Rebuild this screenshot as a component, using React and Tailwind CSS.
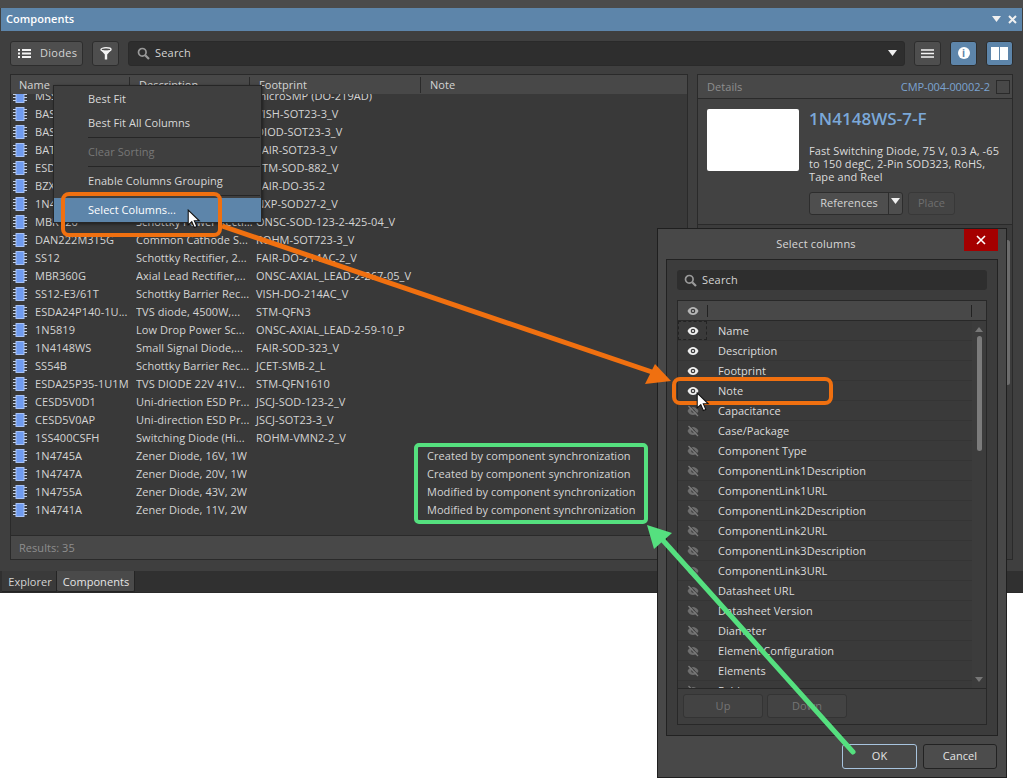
import React from "react";

const rows = [
  ["MSS1P", "Schottky Rectifier", "microSMP (DO-219AD)"],
  ["BAS16", "Switching Diode", "VISH-SOT23-3_V"],
  ["BAS40", "Schottky Diode", "DIOD-SOT23-3_V"],
  ["BAT54", "Schottky Diode", "FAIR-SOT23-3_V"],
  ["ESD5", "ESD Protection", "STM-SOD-882_V"],
  ["BZX55", "Zener Diode", "FAIR-DO-35-2"],
  ["1N4148", "Small Signal Diode", "NXP-SOD27-2_V"],
  ["MBR120", "Schottky Power Rectifier", "ONSC-SOD-123-2-425-04_V"],
  ["DAN222M3T5G", "Common Cathode S...", "ROHM-SOT723-3_V"],
  ["SS12", "Schottky Rectifier, 2...", "FAIR-DO-214AC-2_V"],
  ["MBR360G", "Axial Lead Rectifier,...", "ONSC-AXIAL_LEAD-2-267-05_V"],
  ["SS12-E3/61T", "Schottky Barrier Rec...", "VISH-DO-214AC_V"],
  ["ESDA24P140-1U...", "TVS diode, 4500W,...", "STM-QFN3"],
  ["1N5819", "Low Drop Power Sc...", "ONSC-AXIAL_LEAD-2-59-10_P"],
  ["1N4148WS", "Small Signal Diode,...", "FAIR-SOD-323_V"],
  ["SS54B", "Schottky Barrier Rec...", "JCET-SMB-2_L"],
  ["ESDA25P35-1U1M", "TVS DIODE 22V 41V...", "STM-QFN1610"],
  ["CESD5V0D1", "Uni-driection ESD Pr...", "JSCJ-SOD-123-2_V"],
  ["CESD5V0AP", "Uni-direction ESD Pr...", "JSCJ-SOT23-3_V"],
  ["1SS400CSFH", "Switching Diode (Hi...", "ROHM-VMN2-2_V"],
  ["1N4745A", "Zener Diode, 16V, 1W", "", "Created by component synchronization"],
  ["1N4747A", "Zener Diode, 20V, 1W", "", "Created by component synchronization"],
  ["1N4755A", "Zener Diode, 43V, 2W", "", "Modified by component synchronization"],
  ["1N4741A", "Zener Diode, 11V, 2W", "", "Modified by component synchronization"],
];

const columns = [
  ["Name", 1], ["Description", 1], ["Footprint", 1], ["Note", 1],
  ["Capacitance", 0], ["Case/Package", 0], ["Component Type", 0],
  ["ComponentLink1Description", 0], ["ComponentLink1URL", 0],
  ["ComponentLink2Description", 0], ["ComponentLink2URL", 0],
  ["ComponentLink3Description", 0], ["ComponentLink3URL", 0],
  ["Datasheet URL", 0], ["Datasheet Version", 0], ["Diameter", 0],
  ["Element Configuration", 0], ["Elements", 0], ["Fold", 0],
];

function ChipIcon() {
  return (
    <svg width="14" height="14" viewBox="0 0 14 14" className="shrink-0">
      <g stroke="#c6d2e6" strokeWidth="1">
        <path d="M0 2.5h14M0 5.5h14M0 8.5h14M0 11.5h14" />
      </g>
      <rect x="3" y="0.5" width="8" height="13" fill="#6f9bf0" stroke="#a8c2f5" />
    </svg>
  );
}

function Eye({ on, dim }) {
  if (on) {
    return (
      <svg width="12" height="10" viewBox="0 0 12 10">
        <path d="M0.5 5C2 2 4 1 6 1s4 1 5.5 4C10 8 8 9 6 9S2 8 0.5 5Z" fill={dim ? "#b5b5b5" : "#f0f0f0"} />
        <circle cx="6" cy="5" r="2.3" fill="#3c3c3c" />
        <circle cx="6" cy="5" r="1.1" fill={dim ? "#b5b5b5" : "#f0f0f0"} />
      </svg>
    );
  }
  return (
    <svg width="12" height="12" viewBox="0 0 12 12">
      <path d="M0.5 6C2 3 4 2 6 2s4 1 5.5 4C10 9 8 10 6 10S2 9 0.5 6Z" fill="#6e6e6e" />
      <circle cx="6" cy="6" r="1.8" fill="#3c3c3c" />
      <path d="M1.5 1l9.5 10" stroke="#7a7a7a" strokeWidth="1.4" />
      <path d="M2.6 0.4l9.5 10" stroke="#3c3c3c" strokeWidth="0.8" />
    </svg>
  );
}

function Search() {
  return (
    <svg width="13" height="13" viewBox="0 0 13 13" className="shrink-0">
      <circle cx="5.3" cy="5.3" r="3.8" fill="none" stroke="#9a9a9a" strokeWidth="1.7" />
      <path d="M8.2 8.2l3.8 3.8" stroke="#9a9a9a" strokeWidth="2.2" />
    </svg>
  );
}

function Cursor() {
  return (
    <svg width="14" height="20" viewBox="0 0 13 19">
      <path d="M1 1v14l3.4-3 2.4 5.6 2.4-1-2.4-5.4H11.5Z" fill="#fff" stroke="#111" strokeWidth="1" />
    </svg>
  );
}

function Tri({ c = "#f0f0f0" }) {
  return (
    <svg width="9" height="6" viewBox="0 0 9 6"><path d="M0 0h9L4.5 6Z" fill={c} /></svg>
  );
}

export default function App() {
  return (
    <div className="relative w-[1023px] h-[778px] overflow-hidden bg-white text-[11px] tracking-[0.05px] text-[#d4d4d4]" style={{ fontFamily: '"Open Sans", "Noto Sans", sans-serif' }}>
      {/* Main panel */}
      <div className="h-[593px] bg-[#3f3f3f] flex flex-col border-b border-[#2a2a2a]">
        <div className="h-[8px] bg-[#4b4b4b]" />
        <div className="h-[23px] mx-px bg-[#5d85aa] flex items-center justify-between pl-[5px] pr-[4px]">
          <span className="text-[11px] font-semibold text-white">Components</span>
          <div className="flex items-center gap-[7px] pr-[1px]">
            <Tri />
            <svg width="9" height="9" viewBox="0 0 9 9"><path d="M1 1l7 7M8 1l-7 7" stroke="#f0f0f0" strokeWidth="2" /></svg>
          </div>
        </div>

        {/* toolbar */}
        <div className="h-[25px] mt-[10px] mx-[10px] flex items-stretch">
          <div className="w-[73px] rounded-[3px] bg-[#4e4e4e] border border-[#2d2d2d] flex items-center pl-[7px] gap-[9px]">
            <svg width="13" height="9" viewBox="0 0 13 9"><path d="M0 1h2M4 1h9M0 4.5h2M4 4.5h9M0 8h2M4 8h9" stroke="#f4f4f4" strokeWidth="1.8" /></svg>
            <span className="tracking-[0.3px]">Diodes</span>
          </div>
          <div className="ml-[9px] w-[27px] rounded-[3px] bg-[#4e4e4e] border border-[#2d2d2d] flex items-center justify-center">
            <svg width="12" height="13" viewBox="0 0 12 13">
              <ellipse cx="6" cy="2.5" rx="5" ry="1.7" fill="none" stroke="#f4f4f4" strokeWidth="1.4" />
              <path d="M1 3.2L4.8 7.6V12.5H7.2V7.6L11 3.2" fill="#f4f4f4" />
              <ellipse cx="6" cy="2.5" rx="3.6" ry="0.8" fill="#4e4e4e" />
            </svg>
          </div>
          <div className="ml-[9px] flex-1 rounded-[3px] bg-[#2e2e2e] border border-[#2a2a2a] flex items-center pl-[8px] pr-[7px] gap-[5px]">
            <Search />
            <span className="flex-1 tracking-[0.2px]">Search</span>
            <Tri />
          </div>
          <div className="ml-[9px] w-[27px] rounded-[3px] bg-[#4e4e4e] border border-[#2d2d2d] flex items-center justify-center">
            <svg width="13" height="9" viewBox="0 0 13 9"><path d="M0 1h13M0 4.5h13M0 8h13" stroke="#f4f4f4" strokeWidth="1.6" /></svg>
          </div>
          <div className="ml-[9px] w-[27px] rounded-[3px] bg-[#5d85aa] border border-[#2d2d2d] flex items-center justify-center">
            <span className="w-[12px] h-[12px] rounded-full bg-white text-[#5d85aa] text-[10px] font-bold leading-[12px] text-center">i</span>
          </div>
          <div className="ml-[9px] w-[27px] rounded-[3px] bg-[#5d85aa] border border-[#2d2d2d] flex items-center justify-center gap-px">
            <span className="w-[8px] h-[13px] bg-white" />
            <span className="w-[8px] h-[13px] bg-white" />
          </div>
        </div>

        {/* content */}
        <div className="h-[487px] mt-[8px] mx-[10px] flex gap-[9px]">
          <div className="w-[678px] border border-[#2a2a2a] flex flex-col">
            <div className="h-[19px] bg-[#484848] flex items-center pt-[1px] shrink-0">
              <div className="w-[119px] pl-[8px] border-r border-[#2a2a2a]">Name</div>
              <div className="w-[120px] pl-[9px] border-r border-[#2a2a2a]">Description</div>
              <div className="w-[171px] pl-[9px] border-r border-[#2a2a2a]">Footprint</div>
              <div className="pl-[9px]">Note</div>
            </div>
            <div className="flex-1 bg-[#393939] overflow-hidden">
              <div className="-mt-[7px]">
                {rows.map((r, i) => (
                  <div key={i} className="h-[18px] flex items-center whitespace-nowrap">
                    <div className="w-[125px] pl-[2px] flex items-center gap-[8px]"><ChipIcon /><span>{r[0]}</span></div>
                    <div className="w-[120px] truncate">{r[1]}</div>
                    <div className="w-[171px]">{r[2]}</div>
                    <div>{r[3]}</div>
                  </div>
                ))}
              </div>
            </div>
            <div className="h-[24px] bg-[#484848] border-t border-[#2a2a2a] flex items-center pl-[8px] pt-[2px] text-[#8e8e8e] shrink-0">Results: 35</div>
          </div>

          <div className="flex-1 border border-[#2a2a2a] flex flex-col">
            <div className="h-[24px] bg-[#484848] border-b border-[#2a2a2a] flex items-center pt-[1px] pl-[9px] pr-[2px] shrink-0">
              <span className="flex-1 text-[#8e8e8e]">Details</span>
              <span className="text-[#7ba3d0] mr-[6px] tracking-[-0.1px]">CMP-004-00002-2</span>
              <span className="w-[14px] h-[14px] border border-[#2a2a2a]" />
            </div>
            <div className="h-[126px] bg-[#424242] border-b border-[#2a2a2a] flex pl-[9px] pt-[10px] gap-[10px] shrink-0">
              <div className="w-[92px] h-[62px] bg-white rounded-[2px] shrink-0" />
              <div className="flex-1 pr-[6px]">
                <div className="text-[17px] leading-[20px] font-semibold text-[#7ba8d8]">1N4148WS-7-F</div>
                <div className="mt-[15px] leading-[13px] tracking-[0.1px] text-[#dcdcdc] w-[196px]">Fast Switching Diode, 75 V, 0.3 A, -65 to 150 degC, 2-Pin SOD323, RoHS, Tape and Reel</div>
                <div className="flex mt-[9px] gap-[5px]">
                  <div className="w-[94px] h-[23px] rounded-[3px] bg-[#4e4e4e] border border-[#2d2d2d] flex">
                    <span className="w-[79px] flex items-center justify-center border-r border-[#2d2d2d]">References</span>
                    <span className="flex-1 flex items-center justify-center pb-[4px]"><Tri /></span>
                  </div>
                  <div className="w-[47px] h-[23px] rounded-[3px] border border-[#383838] bg-[#444444] text-[#6f6f6f] flex items-center justify-center">Place</div>
                </div>
              </div>
            </div>
            <div className="flex-1 bg-[#3c3c3c] flex justify-end pr-[2px] pt-[15px]">
              <div className="w-[5px] h-[145px] rounded-full bg-[#6c6c6c]" />
            </div>
          </div>
        </div>

        {/* tabs */}
        <div className="h-[21px] mt-[11px] bg-[#303030] flex items-stretch">
          <div className="ml-[2px] w-[55px] bg-[#3a3a3a] border-b border-r border-[#242424] flex items-center justify-center pt-[2px] pl-[2px]">Explorer</div>
          <div className="w-[78px] bg-[#4a4a4a] border-b border-r border-[#242424] rounded-b-[2px] flex items-center justify-center pt-[2px] pl-[1px] text-[#e6e6e6]">Components</div>
        </div>
      </div>

      {/* Context menu */}
      <div className="absolute left-[53px] top-[85px] w-[209px] h-[138px] bg-[#3f3f3f] border border-[#262626] shadow-[1px_1px_3px_rgba(0,0,0,0.5)]">
        <div className="pt-[1px]">
          <div className="h-[24px] flex items-center pl-[34px] text-[#d8d8d8]">Best Fit</div>
          <div className="h-[24px] flex items-center pl-[34px] text-[#d8d8d8]">Best Fit All Columns</div>
          <div className="h-px ml-[34px] mr-px mt-[2px] bg-[#262626]" />
          <div className="h-[28px] flex items-center pl-[34px] text-[#777777]">Clear Sorting</div>
          <div className="h-px ml-[34px] mr-px bg-[#262626]" />
          <div className="h-[28px] flex items-center pl-[34px] text-[#d8d8d8]">Enable Columns Grouping</div>
          <div className="h-px ml-[34px] mr-px bg-[#262626]" />
          <div className="h-[24px] mt-[2px] bg-[#5d85aa] flex items-center pl-[34px] text-white">Select Columns...</div>
        </div>
      </div>

      {/* Dialog */}
      <div className="absolute left-[657px] top-[228px] w-[350px] h-[550px] bg-[#484848] border border-[#1f1f1f] flex flex-col">
        <div className="h-[30px] flex items-center justify-center relative shrink-0">
          <span className="pr-[32px] text-[#d8d8d8] tracking-[0.2px]">Select columns</span>
          <div className="absolute right-[8px] top-0 w-[34px] h-[22px] bg-[#a50000] flex items-center justify-center">
            <svg width="10" height="10" viewBox="0 0 10 10"><path d="M1 1l8 8M9 1l-8 8" stroke="#fff" strokeWidth="1.6" /></svg>
          </div>
        </div>
        <div className="mx-[8px] h-[477px] bg-[#3c3c3c] border border-[#222222] px-[10px] pt-[10px] flex flex-col shrink-0">
          <div className="h-[20px] rounded-[3px] bg-[#2e2e2e] flex items-center pl-[7px] gap-[5px] shrink-0"><Search /><span className="tracking-[0.2px]">Search</span></div>
          <div className="mt-[10px] h-[425px] border border-[#282828] flex flex-col shrink-0">
            <div className="h-[20px] bg-[#484848] border-b border-[#282828] flex items-center shrink-0">
              <div className="w-[30px] h-[12px] border-r border-[#222222] flex items-center justify-center"><Eye on dim /></div>
              <div className="flex-1 h-[12px] border-r border-[#222222]" />
              <div className="w-[14px]" />
            </div>
            <div className="h-[367px] overflow-hidden relative bg-[#3a3a3a] shrink-0">
              {columns.map(([n, on], i) => (
                <div key={n} className="h-[20px] flex items-center border-b border-[#353535] mr-[14px]">
                  <div className={`w-[29px] h-[19px] flex items-center justify-center ${i === 0 ? "border border-dashed border-[#232323]" : ""}`}><Eye on={!!on} /></div>
                  <span className="ml-[11px] mt-[2px] text-[#dcdcdc]">{n}</span>
                </div>
              ))}
              <div className="absolute right-0 top-0 bottom-0 w-[14px] bg-[#3c3c3c] flex flex-col items-center">
                <svg className="mt-[6px]" width="8" height="5" viewBox="0 0 8 5"><path d="M0 5h8L4 0Z" fill="#777777" /></svg>
                <div className="mt-[4px] w-[5px] h-[115px] rounded-full bg-[#7c7c7c]" />
                <div className="flex-1" />
                <svg className="mb-[6px]" width="8" height="5" viewBox="0 0 8 5"><path d="M0 0h8L4 5Z" fill="#777777" /></svg>
              </div>
            </div>
            <div className="flex-1 bg-[#3e3e3e] border-t border-[#282828] flex gap-[4px] pl-[5px] pt-[5px]">
              <div className="w-[80px] h-[24px] rounded-[3px] border border-[#343434] bg-[#434343] text-[#757575] flex items-center justify-center">Up</div>
              <div className="w-[80px] h-[24px] rounded-[3px] border border-[#343434] bg-[#434343] text-[#757575] flex items-center justify-center">Down</div>
            </div>
          </div>
        </div>
        <div className="flex justify-end gap-[6px] pr-[9px] pt-[8px]">
          <div className="w-[75px] h-[25px] rounded-[3px] border border-[#a8c4de] bg-[#484848] text-[#e4e4e4] flex items-center justify-center">OK</div>
          <div className="w-[74px] h-[25px] rounded-[3px] border border-[#222222] bg-[#4c4c4c] text-[#e4e4e4] flex items-center justify-center">Cancel</div>
        </div>
      </div>

      {/* Annotation boxes */}
      <div className="absolute left-[61px] top-[192px] w-[161px] h-[45px] rounded-[8px] border-[4px] border-[#f07010]" />
      <div className="absolute left-[672px] top-[377px] w-[161px] h-[28px] rounded-[8px] border-[4px] border-[#f07010]" />
      <div className="absolute left-[414px] top-[443px] w-[234px] h-[81px] rounded-[5px] border-[4px] border-[#55e07f]" />

      {/* Arrows */}
      <svg className="absolute left-0 top-0 pointer-events-none" width="1023" height="778" viewBox="0 0 1023 778">
        <path d="M222 226L652 372" stroke="#f07010" strokeWidth="5" />
        <path d="M671 381L655 364L645 384Z" fill="#f07010" />
        <path d="M853 752L660 537" stroke="#55e07f" strokeWidth="5" strokeLinecap="round" />
        <path d="M647 525L672 533L654 549Z" fill="#55e07f" />
      </svg>

      {/* Cursors */}
      <div className="absolute left-[187px] top-[209px]"><Cursor /></div>
      <div className="absolute left-[696px] top-[392px]"><Cursor /></div>
    </div>
  );
}
